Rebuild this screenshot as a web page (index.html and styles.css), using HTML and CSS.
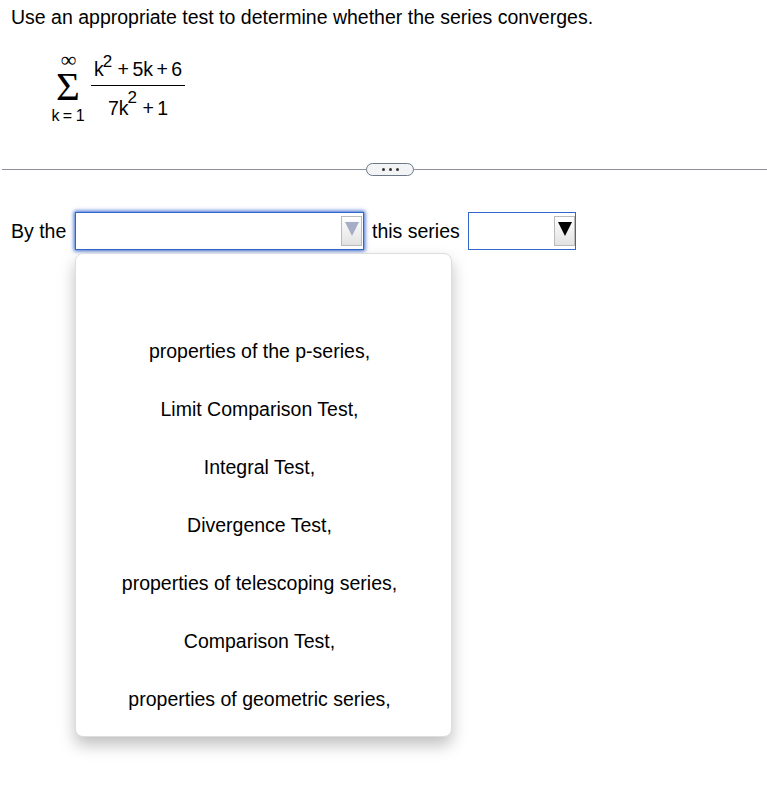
FILE: index.html
```html
<!DOCTYPE html>
<html lang="en">

<head>
    <meta charset="UTF-8">
    <meta name="viewport" content="width=device-width, initial-scale=1.0">
    <title>Series convergence</title>
    <link rel="stylesheet" href="styles.css">
</head>

<body>
    <div class="question">
        <p class="prompt">Use an appropriate test to determine whether the series converges.</p>
        <div class="formula">
            <div class="sum">
                <span class="upper">∞</span>
                <span class="sigma">Σ</span>
                <span class="lower">k = 1</span>
            </div>
            <div class="fraction">
                <div class="top">k<sup>2</sup> + 5k + 6</div>
                <div class="bottom">7k<sup>2</sup> + 1</div>
            </div>
        </div>
    </div>

    <div class="divider">
        <button class="more"><i></i><i></i><i></i></button>
    </div>

    <div class="answer">
        <span class="by">By the</span>
        <div class="select active">
            <span class="arrow"><svg width="14" height="14" viewBox="0 0 14 14"><path d="M0 0H14L7 14Z"/></svg></span>
            <ul class="menu">
                <li></li>
                <li>properties of the p-series,</li>
                <li>Limit Comparison Test,</li>
                <li>Integral Test,</li>
                <li>Divergence Test,</li>
                <li>properties of telescoping series,</li>
                <li>Comparison Test,</li>
                <li>properties of geometric series,</li>
            </ul>
        </div>
        <span class="series">this series</span>
        <div class="select small">
            <span class="arrow"><svg width="14" height="14" viewBox="0 0 14 14"><path d="M0 0H14L7 14Z"/></svg></span>
        </div>
    </div>
</body>

</html>
```

FILE: styles.css
```css
* {
    margin: 0;
    padding: 0;
    box-sizing: border-box;
}

body {
    min-height: 802px;
    background-color: #fff;
    color: #000;
    font: 19.5px/24px "Liberation Sans", Arial, sans-serif;
}

.question {
    height: 162px;
    padding: 5px 11px 0;
}

.prompt {
    white-space: nowrap;
}

.formula {
    display: flex;
    padding: 21px 0 0 40px;
}

.sum {
    width: 34px;
    display: flex;
    flex-direction: column;
    align-items: center;
}

.upper {
    height: 18px;
    padding-left: 1px;
    font: 22px/20px "Liberation Serif", serif;
}

.sigma {
    height: 38px;
    font: 41px/36px "Liberation Serif", serif;
}

.lower {
    font-size: 16px;
    line-height: 20px;
    white-space: nowrap;
    word-spacing: -1px;
}

.fraction {
    width: 94px;
    margin-left: 6px;
    text-align: center;
    white-space: nowrap;
    word-spacing: -2px;
}

.top {
    height: 36px;
    padding-top: 7px;
    border-bottom: 1px solid #000;
}

.bottom {
    padding-top: 10px;
}

sup {
    margin: 0 2px 0 -1px;
    font-size: 17px;
    line-height: 0;
    vertical-align: 9px;
}

.bottom sup {
    vertical-align: 12px;
}

.divider {
    height: 15px;
    margin-left: 2px;
    display: flex;
    align-items: center;
}

.divider::before,
.divider::after {
    content: '';
    height: 1px;
    background-color: #8f8f9c;
}

.divider::before {
    width: 364px;
}

.divider::after {
    flex: 1;
}

.more {
    width: 48px;
    height: 13px;
    border: 1px solid #6b7886;
    border-radius: 7px;
    background-color: #f2f4f6;
    display: flex;
    justify-content: center;
    align-items: center;
    gap: 4px;
}

.more i {
    width: 3px;
    height: 3px;
    border-radius: 50%;
    background-color: #333;
}

.answer {
    display: flex;
    align-items: center;
    height: 38px;
    margin: 35px 0 0 11px;
}

.by {
    width: 64px;
}

.series {
    width: 96px;
    margin-left: 8px;
}

.select {
    position: relative;
    height: 38px;
    border: 1px solid #3366cc;
    display: flex;
    justify-content: flex-end;
}

.active {
    width: 289px;
    padding-right: 1px;
    box-shadow: 0 0 4px 1px #3366cc;
}

.small {
    width: 108px;
}

.arrow {
    width: 21px;
    height: 30px;
    margin-top: 3px;
    border: 1px solid #bbb;
    background: linear-gradient(#fff, #e2e2e2);
    display: flex;
    justify-content: center;
    padding-top: 5px;
}

.active .arrow {
    fill: #a5aec6;
}

/* dropdown list over the page */
.menu {
    position: absolute;
    top: 40px;
    left: -1px;
    width: 377px;
    height: 484px;
    padding: 10px 8px 0 0;
    list-style: none;
    text-align: center;
    border: 1px solid #ddd;
    border-radius: 8px;
    background-color: #fff;
    box-shadow: 0 8px 16px rgba(0, 0, 0, 0.25);
}

.menu li {
    height: 58px;
    line-height: 58px;
}
```
